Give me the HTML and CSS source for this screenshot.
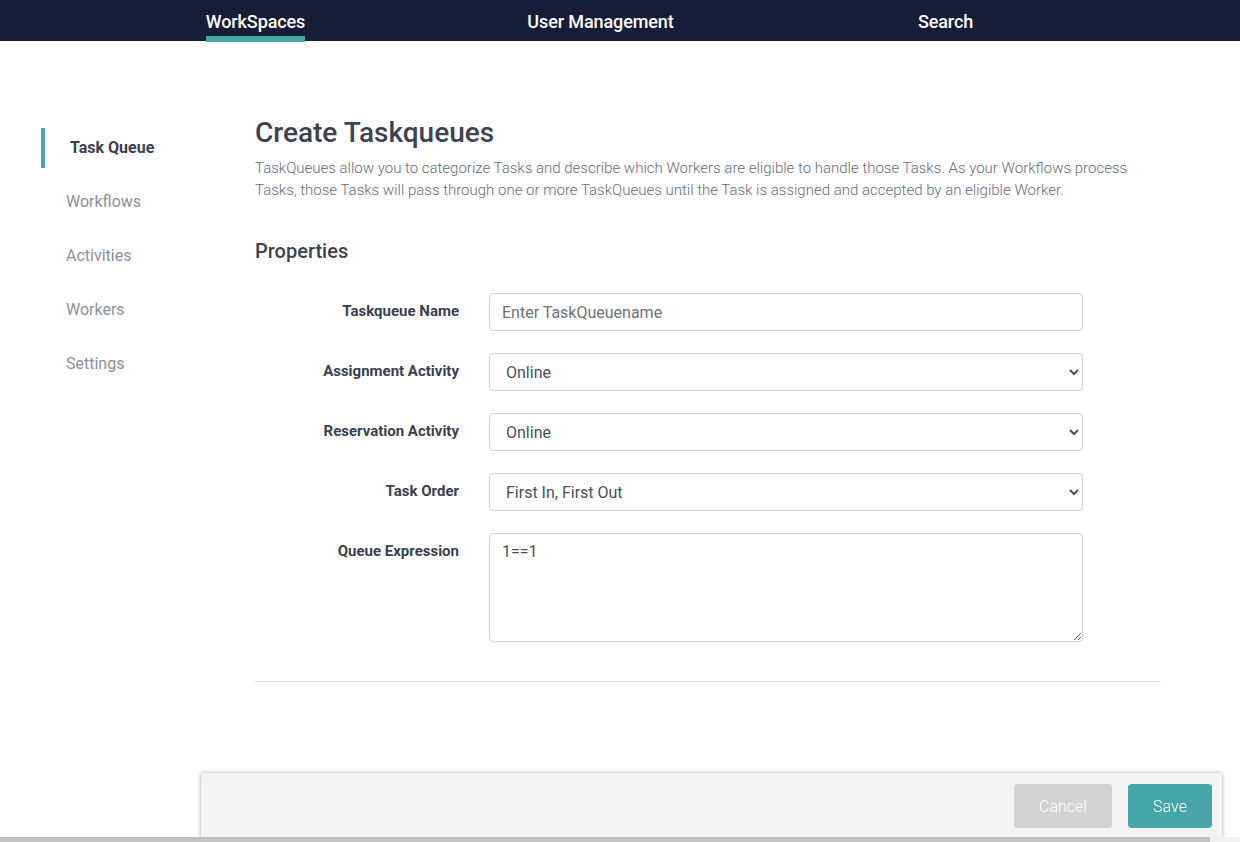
FILE: index.html
```html
<!DOCTYPE html>
<html lang="en">
<head>
<meta charset="utf-8">
<title>Create Taskqueues</title>
<link rel="stylesheet" href="styles.css">
</head>
<body>
<header class="topnav">
  <nav class="topnav-inner">
    <a class="topnav-link active" href="#">WorkSpaces</a>
    <a class="topnav-link" href="#">User Management</a>
    <a class="topnav-link" href="#">Search</a>
  </nav>
</header>

<div class="page">
  <aside class="sidebar">
    <a class="side-item active" href="#">Task Queue</a>
    <a class="side-item" href="#">Workflows</a>
    <a class="side-item" href="#">Activities</a>
    <a class="side-item" href="#">Workers</a>
    <a class="side-item" href="#">Settings</a>
  </aside>

  <main class="content">
    <h1 class="title">Create Taskqueues</h1>
    <p class="intro">TaskQueues allow you to categorize Tasks and describe which Workers are eligible to handle those Tasks. As your Workflows process Tasks, those Tasks will pass through one or more TaskQueues until the Task is assigned and accepted by an eligible Worker.</p>

    <h2 class="section-title">Properties</h2>

    <form class="form">
      <label class="form-label" for="tq-name">Taskqueue Name</label>
      <input class="form-control" id="tq-name" type="text" placeholder="Enter TaskQueuename">

      <label class="form-label" for="tq-assign">Assignment Activity</label>
      <select class="form-control form-select" id="tq-assign">
        <option>Online</option>
      </select>

      <label class="form-label" for="tq-res">Reservation Activity</label>
      <select class="form-control form-select" id="tq-res">
        <option>Online</option>
      </select>

      <label class="form-label" for="tq-order">Task Order</label>
      <select class="form-control form-select" id="tq-order">
        <option>First In, First Out</option>
      </select>

      <label class="form-label" for="tq-expr">Queue Expression</label>
      <textarea class="form-control form-textarea" id="tq-expr">1==1</textarea>
    </form>

    <hr class="divider">
  </main>
</div>

<footer class="actionbar">
  <button class="btn btn-cancel" type="button">Cancel</button>
  <button class="btn btn-save" type="button">Save</button>
</footer>

<div class="hscroll"><div class="hscroll-thumb"></div></div>
</body>
</html>
```

FILE: styles.css
```css
* {
  box-sizing: border-box;
}

html, body {
  margin: 0;
  padding: 0;
  background: #ffffff;
}

body {
  font-family: Roboto, "Liberation Sans", Arial, sans-serif;
  color: #3d4252;
  width: 1240px;
  height: 842px;
  overflow: hidden;
}

/* Top navigation */
.topnav {
  background: #161d36;
  height: 41px;
}

.topnav-inner {
  display: grid;
  grid-template-columns: repeat(3, 345px);
  justify-items: center;
  padding-left: 83px;
  height: 41px;
}

.topnav-link {
  display: inline-block;
  height: 42px;
  line-height: 43px;
  color: #ffffff;
  font-size: 18px;
  font-weight: 500;
  text-decoration: none;
  letter-spacing: -0.1px;
}

.topnav-link.active {
  box-shadow: inset 0 -6px 0 #45a5a9;
}

/* Page layout */
.page {
  display: flex;
}

.sidebar {
  width: 255px;
  flex: none;
  padding-top: 87px;
  padding-left: 41px;
  display: flex;
  flex-direction: column;
  gap: 14px;
}

.side-item {
  display: block;
  height: 40px;
  line-height: 40px;
  padding-left: 25px;
  font-size: 16px;
  color: #8b909c;
  text-decoration: none;
}

.side-item.active {
  border-left: 4px solid #45a5a9;
  color: #3a3f51;
  font-weight: 700;
}

.content {
  width: 906px;
  padding-top: 72px;
}

.title {
  margin: 0;
  font-size: 28px;
  line-height: 40px;
  font-weight: 500;
  color: #3d4252;
}

.intro {
  margin: 4px 0 0 0;
  font-size: 15px;
  line-height: 22px;
  font-weight: 300;
  color: #676c7b;
}

.section-title {
  margin: 38px 0 0 0;
  font-size: 20px;
  line-height: 24px;
  font-weight: 500;
  color: #3d4252;
}

/* Form */
.form {
  display: grid;
  grid-template-columns: 204px 594px;
  column-gap: 30px;
  row-gap: 22px;
  margin-top: 30px;
}

.form-label {
  text-align: right;
  font-size: 15px;
  font-weight: 700;
  line-height: 20px;
  padding-top: 8px;
  color: #3a3f51;
}

.form-control {
  height: 38px;
  width: 594px;
  border: 1px solid #cfcfcf;
  border-radius: 4px;
  padding: 0 12px;
  font-family: Roboto, "Liberation Sans", Arial, sans-serif;
  font-size: 16px;
  color: #495057;
  background: #ffffff;
}

.form-control::placeholder {
  color: #6c717c;
}

.form-select {
  padding-left: 12px;
}

.form-textarea {
  height: 109px;
  padding: 8px 12px;
  line-height: 20px;
  resize: both;
}

.divider {
  margin: 39px 0 0 -1px;
  border: 0;
  border-top: 1px solid #e3e3e3;
  height: 0;
}

/* Footer action bar */
.actionbar {
  position: fixed;
  left: 201px;
  top: 773px;
  width: 1021px;
  height: 69px;
  background: #f4f4f4;
  box-shadow: 0 0 4px rgba(0, 0, 0, 0.35);
  display: flex;
  justify-content: flex-end;
  align-items: flex-start;
  gap: 16px;
  padding: 11px 10px 0 0;
}

.btn {
  height: 44px;
  border: 0;
  border-radius: 4px;
  font-family: Roboto, "Liberation Sans", Arial, sans-serif;
  font-size: 16px;
  font-weight: 300;
  color: #ffffff;
  cursor: pointer;
}

.btn-cancel {
  width: 98px;
  background: #d3d3d3;
}

.btn-save {
  width: 84px;
  background: #45a5a9;
}

/* Horizontal scrollbar strip */
.hscroll {
  position: fixed;
  left: 0;
  bottom: 0;
  width: 1240px;
  height: 5px;
  background: #f1f1f1;
}

.hscroll-thumb {
  width: 1210px;
  height: 5px;
  background: #c1c1c1;
}
```
